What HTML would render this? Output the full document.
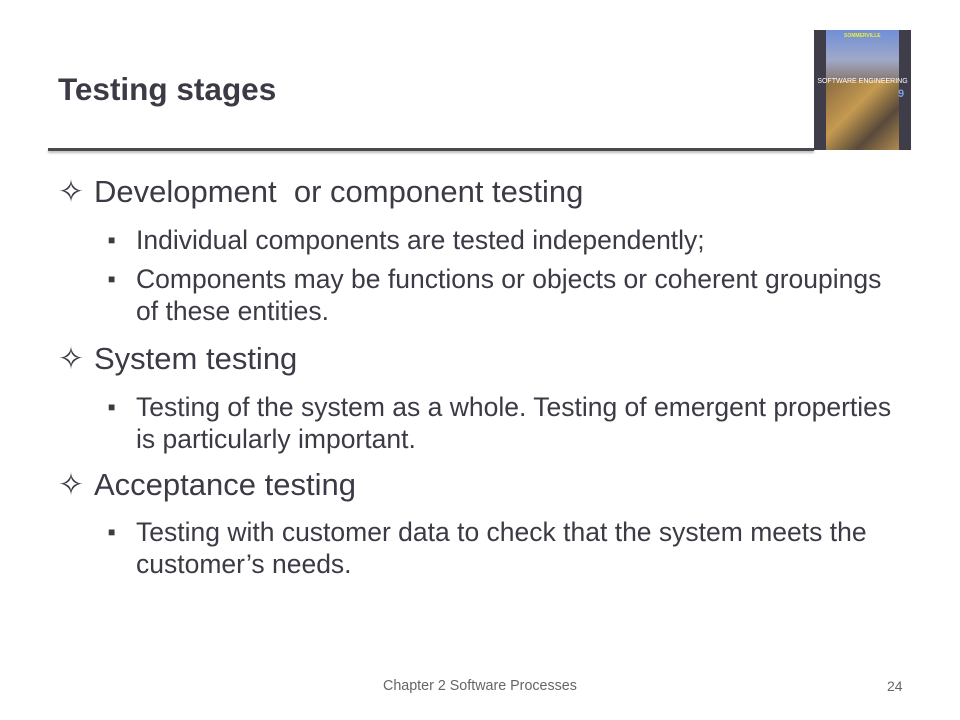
<html><head><style>
body{margin:0;width:960px;height:720px;background:#fff;position:relative;overflow:hidden;font-family:"Liberation Sans",sans-serif;color:#3b3a45}
.a{position:absolute;white-space:nowrap}
.t{font-weight:bold;font-size:31.5px;left:58px;top:71px}
.l1{font-size:31px;left:58px}
.l1 i{font-style:normal;display:inline-block;width:36px}
.l2{font-size:26.5px;left:108px;line-height:32px}
.l2 .b{position:absolute;left:0;top:0;font-size:12px}
.l2 span.x{margin-left:28px;display:block}
</style></head><body>
<div class="a t">Testing stages</div>
<div class="a" style="left:48px;top:148px;width:766px;height:3px;background:#4a4a4e;box-shadow:0 2px 2px #bbb"></div>
<div class="a" style="left:814px;top:30px;width:97px;height:120px;background:#3f3d4a">
 <div class="a" style="left:12px;top:0;width:73px;height:50px;background:linear-gradient(#6f8fd8,#a0a8c8 60%,#8a7a70)"></div>
 <div class="a" style="left:12px;top:50px;width:73px;height:70px;background:linear-gradient(135deg,#8a6a40,#c49a50 40%,#5a4a3a 70%,#b08a50)"></div>
 <div class="a" style="left:0;top:48px;width:97px;font-size:7px;color:#fff;text-align:center">SOFTWARE ENGINEERING</div>
 <div class="a" style="left:84px;top:58px;font-size:11px;font-weight:bold;color:#7aa0e0">9</div>
 <div class="a" style="left:30px;top:3px;font-size:5px;color:#ee3;font-weight:bold">SOMMERVILLE</div>
</div>
<div class="a l1" style="top:174px"><i>✧</i>Development&nbsp; or component testing</div>
<div class="a l2" style="top:224px"><span class="b">■</span><span class="x">Individual components are tested independently;</span></div>
<div class="a l2" style="top:263px"><span class="b">■</span><span class="x">Components may be functions or objects or coherent groupings<br>of these entities.</span></div>
<div class="a l1" style="top:341px"><i>✧</i>System testing</div>
<div class="a l2" style="top:391px"><span class="b">■</span><span class="x">Testing of the system as a whole. Testing of emergent properties<br>is particularly important.</span></div>
<div class="a l1" style="top:467px"><i>✧</i>Acceptance testing</div>
<div class="a l2" style="top:516px"><span class="b">■</span><span class="x">Testing with customer data to check that the system meets the<br>customer’s needs.</span></div>
<div class="a" style="left:383px;top:678px;font-size:14.3px;color:#666">Chapter 2 Software Processes</div>
<div class="a" style="left:887px;top:678px;font-size:14px;color:#666">24</div>
</body></html>
